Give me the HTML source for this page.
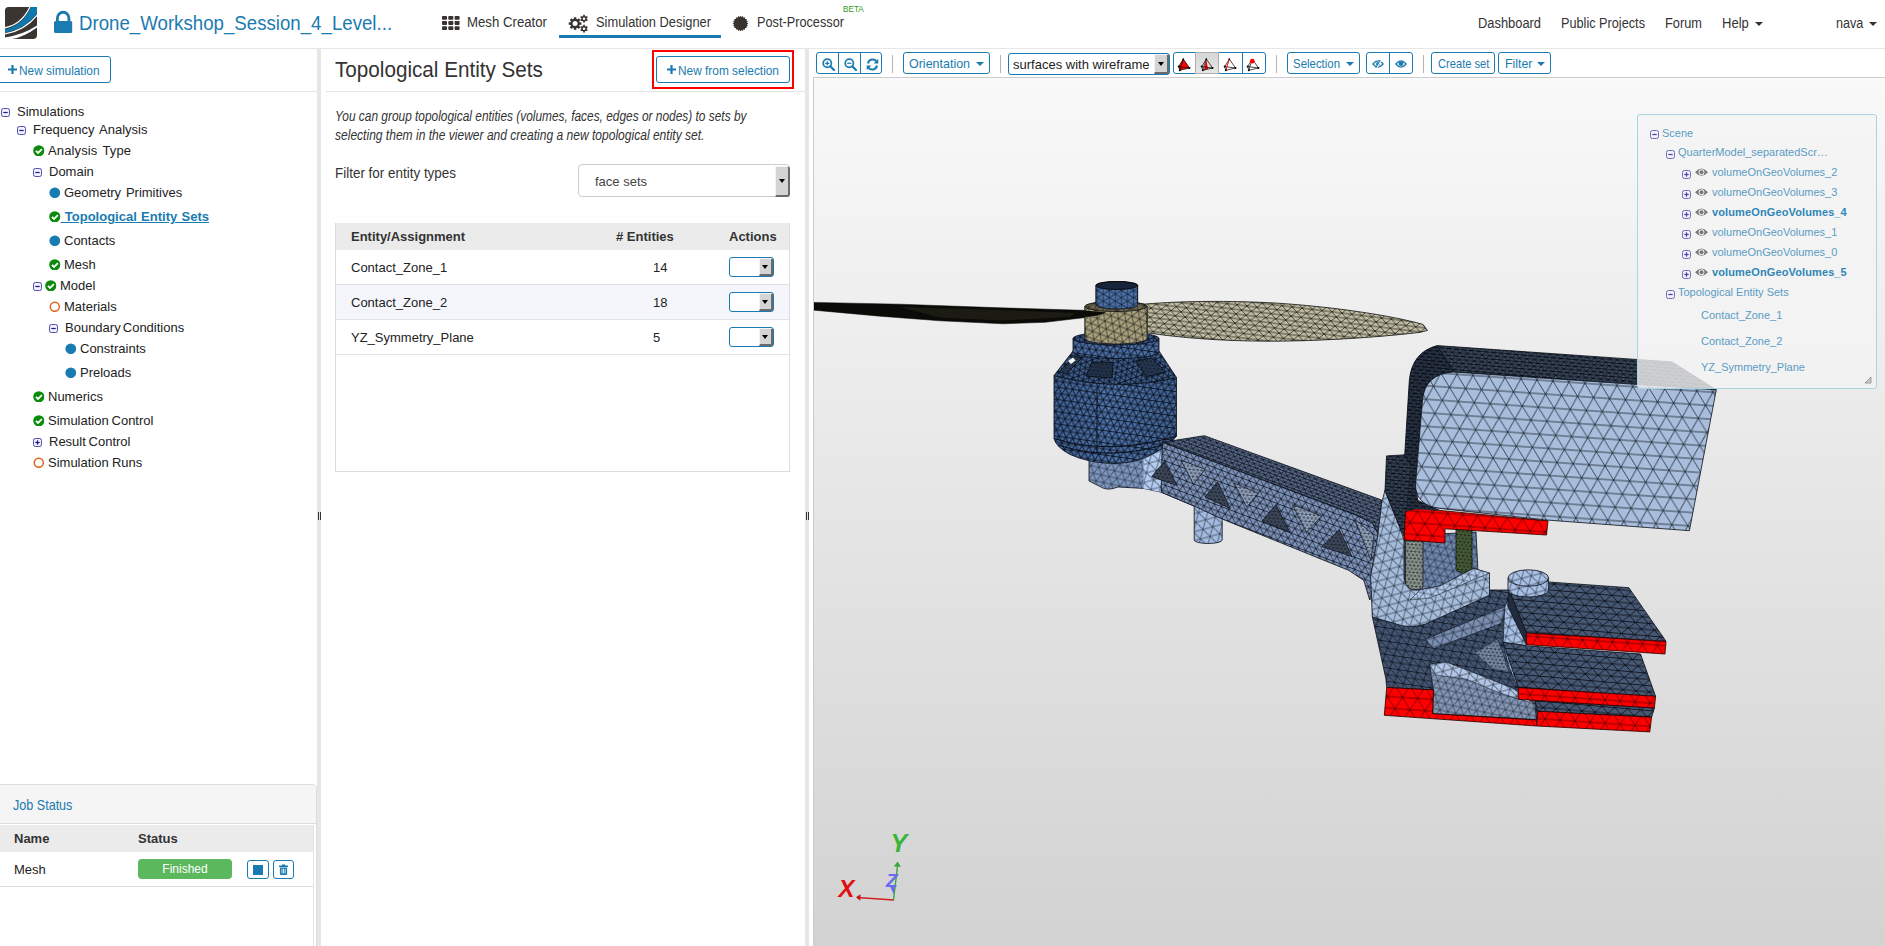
<!DOCTYPE html>
<html>
<head>
<meta charset="utf-8">
<title>SimScale</title>
<style>
*{box-sizing:border-box;margin:0;padding:0}
html,body{width:1885px;height:946px;overflow:hidden;background:#fff;font-family:"Liberation Sans",sans-serif;color:#333;font-size:13px}
.a{position:absolute;white-space:nowrap}
.t{position:absolute;white-space:nowrap;line-height:1;transform-origin:0 50%}
/* header */
#hdr{left:0;top:0;width:1885px;height:49px;border-bottom:1px solid #e7e7e7;background:#fff}
.nav{font-size:14px;color:#333}
/* buttons */
.btn{position:absolute;border:1px solid #1a7bb0;border-radius:3px;background:#fff;color:#1a7bb0;white-space:nowrap}
.sep{position:absolute;width:1px;background:#bcb0a8;top:55px;height:18px}
/* tree */
.tr{position:absolute;white-space:nowrap;font-size:13px;line-height:15px;color:#222;margin-top:1px}
.tg{position:absolute;width:10px;height:10px}
.ic{position:absolute;width:12px;height:12px}
/* scene tree */
.st{position:absolute;white-space:nowrap;font-size:11px;line-height:13px;color:#5a9cc4;margin-top:1px}
</style>
</head>
<body>
<!-- ============ HEADER ============ -->
<div class="a" id="hdr"></div>
<svg class="a" id="logo" style="left:5px;top:7px" width="32" height="32" viewBox="0 0 32 32">
<path d="M3.5,0 H32 V28 a4,4 0 0 1 -4,4 H0 V3.5 a3.5,3.5 0 0 1 3.5,-3.5 Z" fill="#3b3532"/>
<path d="M0,20 Q16,17 24.2,0 L25.6,0 Q17,18.2 0,21.4 Z" fill="#fff"/>
<path d="M0,22.2 Q17.6,18.8 26,0 L32,0 L32,6.9 Q20,22 0,25.8 Z" fill="#0d78ae"/>
<path d="M0,26.3 Q20,22.6 32,7.6 L32,9.2 Q20,24 0,27.6 Z" fill="#fff"/>
<path d="M0,30.4 Q18,28 32,18.6 L32,20.4 Q19,30 6.7,32 L0,32 Z" fill="#fff"/>
</svg>
<svg class="a" id="lock" style="left:54px;top:10px" width="19" height="24" viewBox="0 0 19 24">
<path d="M2,11.5 V8 a7.15,7.15 0 0 1 14.3,0 V11.5 h-2.8 V8 a4.35,4.35 0 0 0 -8.7,0 V11.5 Z" fill="#1a7bb0"/>
<rect x="0" y="11" width="18.2" height="12" rx="1.6" fill="#1a7bb0"/>
</svg>
<div class="t" id="title" style="left:79.3px;top:11.5px;font-size:21px;color:#1a7bb0;transform:scaleX(.889)">Drone_Workshop_Session_4_Level...</div>

<svg class="a" id="icth" style="left:442px;top:16px" width="18" height="15" viewBox="0 0 18 15" fill="#39332f">
<rect x="0" y="0" width="5" height="3.8" rx=".8"/><rect x="6.3" y="0" width="5" height="3.8" rx=".8"/><rect x="12.6" y="0" width="5" height="3.8" rx=".8"/>
<rect x="0" y="5.1" width="5" height="3.8" rx=".8"/><rect x="6.3" y="5.1" width="5" height="3.8" rx=".8"/><rect x="12.6" y="5.1" width="5" height="3.8" rx=".8"/>
<rect x="0" y="10.2" width="5" height="3.8" rx=".8"/><rect x="6.3" y="10.2" width="5" height="3.8" rx=".8"/><rect x="12.6" y="10.2" width="5" height="3.8" rx=".8"/>
</svg>
<div class="t nav" id="n1" style="left:467px;top:15px;transform:scaleX(.943)">Mesh Creator</div>

<svg class="a" id="iccogs" style="left:568px;top:14px" width="21" height="19" viewBox="0 0 21 19"><g fill="#39332f"><circle cx="7.06" cy="9.57" r="4.7"/><rect x="5.81" y="3.27" width="2.5" height="12.60" transform="rotate(0.0 7.06 9.57)"/><rect x="5.81" y="3.27" width="2.5" height="12.60" transform="rotate(45.0 7.06 9.57)"/><rect x="5.81" y="3.27" width="2.5" height="12.60" transform="rotate(90.0 7.06 9.57)"/><rect x="5.81" y="3.27" width="2.5" height="12.60" transform="rotate(135.0 7.06 9.57)"/><circle cx="16.03" cy="4.66" r="2.75"/><rect x="15.18" y="0.76" width="1.7" height="7.80" transform="rotate(0.0 16.03 4.66)"/><rect x="15.18" y="0.76" width="1.7" height="7.80" transform="rotate(60.0 16.03 4.66)"/><rect x="15.18" y="0.76" width="1.7" height="7.80" transform="rotate(120.0 16.03 4.66)"/><circle cx="16.03" cy="14.64" r="2.75"/><rect x="15.18" y="10.74" width="1.7" height="7.80" transform="rotate(0.0 16.03 14.64)"/><rect x="15.18" y="10.74" width="1.7" height="7.80" transform="rotate(60.0 16.03 14.64)"/><rect x="15.18" y="10.74" width="1.7" height="7.80" transform="rotate(120.0 16.03 14.64)"/></g><circle cx="7.06" cy="9.57" r="2.5" fill="#fff"/><circle cx="16.03" cy="4.66" r="1.25" fill="#fff"/><circle cx="16.03" cy="14.64" r="1.25" fill="#fff"/></svg>
<div class="t nav" id="n2" style="left:596px;top:15px;transform:scaleX(.918)">Simulation Designer</div>
<div class="a" id="uline" style="left:559px;top:35px;width:162px;height:3px;background:#1a7bb0"></div>

<svg class="a" id="iccert" style="left:732px;top:15.1px" width="17" height="17" viewBox="-8.5 -8.5 17 17"><polygon points="0.00,-7.80 1.02,-6.42 2.41,-7.42 2.95,-5.79 4.58,-6.31 4.60,-4.60 6.31,-4.58 5.79,-2.95 7.42,-2.41 6.42,-1.02 7.80,-0.00 6.42,1.02 7.42,2.41 5.79,2.95 6.31,4.58 4.60,4.60 4.58,6.31 2.95,5.79 2.41,7.42 1.02,6.42 0.00,7.80 -1.02,6.42 -2.41,7.42 -2.95,5.79 -4.58,6.31 -4.60,4.60 -6.31,4.58 -5.79,2.95 -7.42,2.41 -6.42,1.02 -7.80,0.00 -6.42,-1.02 -7.42,-2.41 -5.79,-2.95 -6.31,-4.58 -4.60,-4.60 -4.58,-6.31 -2.95,-5.79 -2.41,-7.42 -1.02,-6.42" fill="#39332f"/></svg>
<div class="t nav" id="n3" style="left:757px;top:15px;transform:scaleX(.909)">Post-Processor</div>
<div class="t" id="beta" style="left:843.3px;top:5px;font-size:9px;color:#2f9a1a;transform:scaleX(.91)">BETA</div>

<div class="t nav" id="n4" style="left:1478px;top:16px;transform:scaleX(.92)">Dashboard</div>
<div class="t nav" id="n5" style="left:1561px;top:16px;transform:scaleX(.907)">Public Projects</div>
<div class="t nav" id="n6" style="left:1665px;top:16px;transform:scaleX(.914)">Forum</div>
<div class="t nav" id="n7" style="left:1722px;top:16px;transform:scaleX(.93)">Help</div>
<div class="a" style="left:1755px;top:22px;width:0;height:0;border-left:4px solid transparent;border-right:4px solid transparent;border-top:4px solid #333"></div>
<div class="t nav" id="n8" style="left:1836px;top:16px;transform:scaleX(.9)">nava</div>
<div class="a" style="left:1869px;top:22px;width:0;height:0;border-left:4px solid transparent;border-right:4px solid transparent;border-top:4px solid #333"></div>

<!-- ============ LEFT PANEL ============ -->
<div class="btn" id="newsim" style="left:-3px;top:56px;width:114px;height:27px"></div>
<svg class="a" style="left:8px;top:65px" width="9" height="9" viewBox="0 0 9 9"><path d="M3.4,0 h2.2 v3.4 h3.4 v2.2 h-3.4 v3.4 h-2.2 v-3.4 h-3.4 v-2.2 h3.4 Z" fill="#1a7bb0"/></svg>
<div class="t" id="newsimt" style="left:18.5px;top:64.5px;font-size:12.5px;color:#1a7bb0;transform:scaleX(.95)">New simulation</div>
<div class="a" id="split1" style="left:317px;top:49px;width:4px;height:897px;background:#e6e6e6"></div>
<div class="a" id="split2" style="left:805px;top:49px;width:4px;height:897px;background:#e6e6e6"></div>
<div class="a" style="left:0;top:91px;width:317px;height:1px;background:#e5e5e5"></div>
<div class="a" style="left:326px;top:91px;width:479px;height:1px;background:#e5e5e5"></div>

<svg width="0" height="0" style="position:absolute">
<defs>
<symbol id="tgm" viewBox="0 0 10 10"><rect x=".6" y=".6" width="8.8" height="8.8" rx="2" fill="#f4f4ff" stroke="#4a4aa8" stroke-width="1.1"/><rect x="2.6" y="4.3" width="4.8" height="1.4" fill="#1a1a8c"/></symbol>
<symbol id="tgp" viewBox="0 0 10 10"><rect x=".6" y=".6" width="8.8" height="8.8" rx="2" fill="#f4f4ff" stroke="#4a4aa8" stroke-width="1.1"/><rect x="2.6" y="4.3" width="4.8" height="1.4" fill="#1a1a8c"/><rect x="4.3" y="2.6" width="1.4" height="4.8" fill="#1a1a8c"/></symbol>
<symbol id="chk" viewBox="0 0 12 12"><circle cx="6" cy="6" r="5.8" fill="#0b8a0b"/><path d="M3,6.1 L5.2,8.3 L9.2,4.3" fill="none" stroke="#fff" stroke-width="1.9"/></symbol>
<symbol id="dot" viewBox="0 0 12 12"><circle cx="6" cy="6" r="5.6" fill="#1a7bb0"/></symbol>
<symbol id="ring" viewBox="0 0 12 12"><circle cx="6" cy="6" r="4.7" fill="#fff" stroke="#e0621c" stroke-width="1.5"/></symbol>
<symbol id="eye" viewBox="0 0 14 9"><path d="M0,4.5 Q7,-3.2 14,4.5 Q7,12.2 0,4.5 Z" fill="#777"/><circle cx="7" cy="4.5" r="3.1" fill="#f2f2f2"/><circle cx="7" cy="4.5" r="2.1" fill="#777"/></symbol>
</defs></svg>

<svg class="a" style="left:1px;top:108.0px" width="9" height="9"><use href="#tgm"/></svg>
<div class="tr" style="left:17px;top:103px;">Simulations</div>
<svg class="a" style="left:17px;top:126.0px" width="9" height="9"><use href="#tgm"/></svg>
<div class="tr" style="left:33px;top:121px;word-spacing:1.7px">Frequency Analysis</div>
<svg class="a" style="left:33px;top:144.6px" width="11.6" height="11.6"><use href="#chk"/></svg>
<div class="tr" style="left:48px;top:142px;word-spacing:1.5px;letter-spacing:.13px">Analysis Type</div>
<svg class="a" style="left:33px;top:168.0px" width="9" height="9"><use href="#tgm"/></svg>
<div class="tr" style="left:49px;top:163px;">Domain</div>
<svg class="a" style="left:49px;top:186.6px" width="11.6" height="11.6"><use href="#dot"/></svg>
<div class="tr" style="left:64px;top:184px;word-spacing:1.2px">Geometry Primitives</div>
<svg class="a" style="left:49px;top:210.6px" width="11.6" height="11.6"><use href="#chk"/></svg>
<div class="tr" style="left:60.5px;top:208px;font-weight:700;color:#1a7bb0;text-decoration:underline;word-spacing:0.7px">&nbsp;Topological Entity Sets</div>
<svg class="a" style="left:49px;top:234.6px" width="11.6" height="11.6"><use href="#dot"/></svg>
<div class="tr" style="left:64px;top:232px;">Contacts</div>
<svg class="a" style="left:49px;top:258.6px" width="11.6" height="11.6"><use href="#chk"/></svg>
<div class="tr" style="left:64px;top:256px;">Mesh</div>
<svg class="a" style="left:33px;top:282.0px" width="9" height="9"><use href="#tgm"/></svg>
<svg class="a" style="left:45px;top:279.6px" width="11.6" height="11.6"><use href="#chk"/></svg>
<div class="tr" style="left:60px;top:277px;">Model</div>
<svg class="a" style="left:49px;top:300.6px" width="11.6" height="11.6"><use href="#ring"/></svg>
<div class="tr" style="left:64px;top:298px;">Materials</div>
<svg class="a" style="left:49px;top:324.0px" width="9" height="9"><use href="#tgm"/></svg>
<div class="tr" style="left:65px;top:319px;word-spacing:-1.5px">Boundary Conditions</div>
<svg class="a" style="left:65px;top:342.6px" width="11.6" height="11.6"><use href="#dot"/></svg>
<div class="tr" style="left:80px;top:340px;">Constraints</div>
<svg class="a" style="left:65px;top:366.6px" width="11.6" height="11.6"><use href="#dot"/></svg>
<div class="tr" style="left:80px;top:364px;">Preloads</div>
<svg class="a" style="left:33px;top:390.6px" width="11.6" height="11.6"><use href="#chk"/></svg>
<div class="tr" style="left:48px;top:388px;">Numerics</div>
<svg class="a" style="left:33px;top:414.6px" width="11.6" height="11.6"><use href="#chk"/></svg>
<div class="tr" style="left:48px;top:412px;word-spacing:-0.8px">Simulation Control</div>
<svg class="a" style="left:33px;top:438.0px" width="9" height="9"><use href="#tgp"/></svg>
<div class="tr" style="left:49px;top:433px;word-spacing:-0.9px">Result Control</div>
<svg class="a" style="left:33px;top:456.6px" width="11.6" height="11.6"><use href="#ring"/></svg>
<div class="tr" style="left:48px;top:454px;word-spacing:-0.4px">Simulation Runs</div>
<!-- job status -->
<div class="a" id="jobpanel" style="left:-1px;top:784px;width:318px;height:170px;border:1px solid #ddd;border-radius:0 4px 0 0;background:#fff"></div>
<div class="a" style="left:0;top:785px;width:316px;height:39px;background:#f5f5f5;border-bottom:1px solid #ddd;border-radius:0 3px 0 0"></div>
<div class="t" id="jobt" style="left:13px;top:798px;font-size:14.5px;color:#1a7bb0;transform:scaleX(.867)">Job Status</div>
<div class="a" style="left:0;top:825px;width:313px;height:27px;background:#ebebeb"></div>
<div class="a" style="left:313px;top:825px;width:1px;height:121px;background:#e3e3e3"></div>
<div class="tr" style="left:14px;top:830px;font-weight:700;color:#333">Name</div>
<div class="tr" style="left:138px;top:830px;font-weight:700;color:#333">Status</div>
<div class="tr" style="left:14px;top:861px;color:#222">Mesh</div>
<div class="a" style="left:138px;top:859px;width:94px;height:20px;background:#5cb85c;border-radius:4px;color:#fff;font-size:12px;line-height:21px;text-align:center">Finished</div>
<div class="btn" style="left:247px;top:860px;width:22px;height:19px"></div>
<div class="a" style="left:253px;top:865px;width:10px;height:10px;background:#1a7bb0"></div>
<div class="btn" style="left:273px;top:860px;width:21px;height:19px"></div>
<svg class="a" style="left:279px;top:864px" width="9" height="11" viewBox="0 0 9 11"><path d="M0,1.6 h2.8 v-1.2 h3.4 v1.2 h2.8 v1.3 h-9 Z M.9,3.6 h7.2 v6.4 a1,1 0 0 1 -1,1 h-5.2 a1,1 0 0 1 -1,-1 Z" fill="#1a7bb0"/><path d="M2.9,4.8 v4.6 M4.5,4.8 v4.6 M6.1,4.8 v4.6" stroke="#fff" stroke-width=".8"/></svg>
<div class="a" style="left:0;top:886px;width:313px;height:1px;background:#ddd"></div>

<!-- ============ MIDDLE PANEL ============ -->
<div class="t" id="mtitle" style="left:334.5px;top:58.8px;font-size:21.7px;color:#333;transform:scaleX(.953)">Topological Entity Sets</div>
<div class="a" id="redbox" style="left:652px;top:50px;width:142px;height:39px;border:2px solid #f00"></div>
<div class="btn" id="newsel" style="left:656px;top:56px;width:134px;height:27px"></div>
<svg class="a" style="left:667px;top:65px" width="9" height="9" viewBox="0 0 9 9"><path d="M3.4,0 h2.2 v3.4 h3.4 v2.2 h-3.4 v3.4 h-2.2 v-3.4 h-3.4 v-2.2 h3.4 Z" fill="#1a7bb0"/></svg>
<div class="t" id="newselt" style="left:678px;top:64.5px;font-size:12.5px;color:#1a7bb0;transform:scaleX(.95)">New from selection</div>
<div class="t" id="desc1" style="left:335px;top:109px;font-size:14px;font-style:italic;color:#333;transform:scaleX(.85)">You can group topological entities (volumes, faces, edges or nodes) to sets by</div>
<div class="t" id="desc2" style="left:335px;top:128px;font-size:14px;font-style:italic;color:#333;transform:scaleX(.86)">selecting them in the viewer and creating a new topological entity set.</div>
<div class="t" id="filt" style="left:335px;top:166px;font-size:14px;color:#333;transform:scaleX(.96)">Filter for entity types</div>
<div class="a" id="sel1" style="left:578px;top:164px;width:212px;height:33px;border:1px solid #ccc;border-radius:4px;background:#fff"></div>
<div class="a" style="left:775px;top:166px;width:15px;height:31px;background:#d4d4d4;border-left:1px solid #f4f4f4;border-top:1px solid #f4f4f4;border-right:2px solid #6a6a6a;border-bottom:2px solid #6a6a6a;border-radius:0 3px 3px 0"></div>
<div class="a" style="left:778.5px;top:179px;width:0;height:0;border-left:3.5px solid transparent;border-right:3.5px solid transparent;border-top:4px solid #000"></div>
<div class="tr" style="left:595px;top:173px;color:#444">face sets</div>

<div class="a" id="tblbox" style="left:335px;top:223px;width:455px;height:249px;border:1px solid #ddd;background:#fff"></div>
<div class="a" style="left:336px;top:223px;width:453px;height:27px;background:#ebebeb"></div>
<div class="tr" style="left:351px;top:228px;font-weight:700;color:#333">Entity/Assignment</div>
<div class="tr" style="left:616px;top:228px;font-weight:700;color:#333">#&nbsp;Entities</div>
<div class="tr" style="left:729px;top:228px;font-weight:700;color:#333">Actions</div>
<div class="a" style="left:336px;top:285px;width:453px;height:35px;background:#f4f6fb"></div>
<div class="a" style="left:336px;top:284px;width:453px;height:1px;background:#e2e2e2"></div>
<div class="a" style="left:336px;top:319px;width:453px;height:1px;background:#e2e2e2"></div>
<div class="a" style="left:336px;top:354px;width:453px;height:1px;background:#e2e2e2"></div>
<div class="tr" style="left:351px;top:259px">Contact_Zone_1</div>
<div class="tr" style="left:351px;top:294px">Contact_Zone_2</div>
<div class="tr" style="left:351px;top:329px">YZ_Symmetry_Plane</div>
<div class="tr" style="left:653px;top:259px">14</div>
<div class="tr" style="left:653px;top:294px">18</div>
<div class="tr" style="left:653px;top:329px">5</div>
<div class="a" style="left:729px;top:257px;width:45px;height:20px;border:1px solid #1a7bb0;border-radius:3px;background:#fff"></div>
<div class="a" style="left:759px;top:258px;width:14px;height:18px;background:#d4d4d4;border-left:1px solid #f4f4f4;border-top:1px solid #f4f4f4;border-right:2px solid #6a6a6a;border-bottom:2px solid #6a6a6a"></div>
<div class="a" style="left:762px;top:265px;width:0;height:0;border-left:3.5px solid transparent;border-right:3.5px solid transparent;border-top:4px solid #000"></div>
<div class="a" style="left:729px;top:292px;width:45px;height:20px;border:1px solid #1a7bb0;border-radius:3px;background:#fff"></div>
<div class="a" style="left:759px;top:293px;width:14px;height:18px;background:#d4d4d4;border-left:1px solid #f4f4f4;border-top:1px solid #f4f4f4;border-right:2px solid #6a6a6a;border-bottom:2px solid #6a6a6a"></div>
<div class="a" style="left:762px;top:300px;width:0;height:0;border-left:3.5px solid transparent;border-right:3.5px solid transparent;border-top:4px solid #000"></div>
<div class="a" style="left:729px;top:327px;width:45px;height:20px;border:1px solid #1a7bb0;border-radius:3px;background:#fff"></div>
<div class="a" style="left:759px;top:328px;width:14px;height:18px;background:#d4d4d4;border-left:1px solid #f4f4f4;border-top:1px solid #f4f4f4;border-right:2px solid #6a6a6a;border-bottom:2px solid #6a6a6a"></div>
<div class="a" style="left:762px;top:335px;width:0;height:0;border-left:3.5px solid transparent;border-right:3.5px solid transparent;border-top:4px solid #000"></div>
<div class="a" style="left:318px;top:512px;width:1px;height:8px;background:#333"></div><div class="a" style="left:320px;top:512px;width:1px;height:8px;background:#333"></div>
<div class="a" style="left:806px;top:512px;width:1px;height:8px;background:#333"></div><div class="a" style="left:808px;top:512px;width:1px;height:8px;background:#333"></div>

<!-- ============ TOOLBAR ============ -->
<div class="a" style="left:813px;top:77px;width:1072px;height:1px;background:#ccc"></div>
<div class="btn" style="left:816px;top:52px;width:66px;height:22px"></div>
<div class="a" style="left:838px;top:52px;width:1px;height:22px;background:#1a7bb0"></div>
<div class="a" style="left:860px;top:52px;width:1px;height:22px;background:#1a7bb0"></div>
<svg class="a" style="left:821.5px;top:58px" width="13" height="13" viewBox="0 0 13 13"><circle cx="5.3" cy="5.3" r="4.1" fill="none" stroke="#1a7bb0" stroke-width="1.7"/><path d="M8.3,8.3 L12,12" stroke="#1a7bb0" stroke-width="2.2" stroke-linecap="round"/><path d="M3.2,5.3 h4.2 M5.3,3.2 v4.2" stroke="#1a7bb0" stroke-width="1.2"/></svg>
<svg class="a" style="left:843.5px;top:58px" width="13" height="13" viewBox="0 0 13 13"><circle cx="5.3" cy="5.3" r="4.1" fill="none" stroke="#1a7bb0" stroke-width="1.7"/><path d="M8.3,8.3 L12,12" stroke="#1a7bb0" stroke-width="2.2" stroke-linecap="round"/><path d="M3.2,5.3 h4.2" stroke="#1a7bb0" stroke-width="1.2"/></svg>
<svg class="a" style="left:865.5px;top:58px" width="13" height="13" viewBox="0 0 13 13"><path d="M2,5.5 A4.8,4.8 0 0 1 10.6,3.4" fill="none" stroke="#1a7bb0" stroke-width="2"/><path d="M12.3,1 V5.6 H7.7 Z" fill="#1a7bb0"/><path d="M11,7.5 A4.8,4.8 0 0 1 2.4,9.6" fill="none" stroke="#1a7bb0" stroke-width="2"/><path d="M.7,12 V7.4 H5.3 Z" fill="#1a7bb0"/></svg>
<div class="sep" style="left:892px"></div>
<div class="btn" style="left:903px;top:52px;width:87px;height:22px"></div>
<div class="t" style="left:909px;top:57px;font-size:13px;color:#1a7bb0;transform:scaleX(.96)">Orientation</div>
<div class="a" style="left:975.5px;top:62px;width:0;height:0;border-left:4px solid transparent;border-right:4px solid transparent;border-top:4px solid #1a7bb0"></div>
<div class="sep" style="left:1000px"></div>
<div class="a" style="left:1008px;top:53px;width:162px;height:22px;border:1px solid #1a7bb0;border-radius:3px;background:#fff"></div>
<div class="a" style="left:1154px;top:54px;width:15px;height:20px;background:#d4d4d4;border-left:1px solid #f4f4f4;border-top:1px solid #f4f4f4;border-right:2px solid #6a6a6a;border-bottom:2px solid #6a6a6a"></div>
<div class="a" style="left:1157.5px;top:62px;width:0;height:0;border-left:3.5px solid transparent;border-right:3.5px solid transparent;border-top:4px solid #000"></div>
<div class="tr" style="left:1013px;top:56px;color:#222">surfaces with wireframe</div>
<div class="btn" style="left:1173px;top:52px;width:93px;height:22px"></div>
<div class="a" style="left:1195px;top:52px;width:24px;height:22px;background:linear-gradient(#d6d6d6,#e6e6e6);border:1px solid #adadad"></div>
<div class="a" style="left:1242px;top:52px;width:1px;height:22px;background:#1a7bb0"></div>
<svg class="a" style="left:1173.2px;top:52px" width="93" height="22" viewBox="0 0 93 22">
<g id="tet1"><path d="M10.3,7.1 L5.7,14.6 L6.8,18.3 L16.5,16 Z" fill="#f00"/><path d="M10.3,7.1 L5.7,14.6 L6.8,18.3 L16.5,16 Z M10.3,7.1 L6.8,18.3 M5.7,14.6 L16.5,16" fill="none" stroke="#000" stroke-width=".7"/><circle cx="10.3" cy="7.1" r=".9"/><circle cx="5.7" cy="14.6" r="1"/><circle cx="6.8" cy="18.3" r="1"/><circle cx="16.5" cy="16" r="1"/></g>
<g transform="translate(23 0)"><path d="M10.3,7.1 L8,17.9 L12,17 Z" fill="#f00"/><path d="M10.3,7.1 L5.7,14.6 L6.8,18.3 L16.5,16 Z M10.3,7.1 L6.8,18.3 M5.7,14.6 L16.5,16" fill="none" stroke="#000" stroke-width=".7"/><circle cx="10.3" cy="7.1" r=".9"/><circle cx="5.7" cy="14.6" r="1"/><circle cx="6.8" cy="18.3" r="1"/><circle cx="16.5" cy="16" r="1"/></g>
<g transform="translate(46 0)"><path d="M10.3,7.1 L5.7,14.6 L6.8,18.3 L16.5,16 Z M5.7,14.6 L16.5,16" fill="none" stroke="#000" stroke-width=".7"/><path d="M10.3,7.1 L6.8,18.3" stroke="#f00" stroke-width="1"/><circle cx="10.3" cy="7.1" r=".9"/><circle cx="5.7" cy="14.6" r="1"/><circle cx="6.8" cy="18.3" r="1"/><circle cx="16.5" cy="16" r="1"/></g>
<g transform="translate(69 0)"><path d="M10.3,7.1 L5.7,14.6 L6.8,18.3 L16.5,16 Z M10.3,7.1 L6.8,18.3 M5.7,14.6 L16.5,16" fill="none" stroke="#000" stroke-width=".7"/><circle cx="10.3" cy="9.2" r="2.35" fill="#f00"/><circle cx="5.7" cy="14.6" r="1"/><circle cx="6.8" cy="18.3" r="1"/><circle cx="16.5" cy="16" r="1"/></g>
</svg>
<div class="sep" style="left:1276px"></div>
<div class="btn" style="left:1287px;top:52px;width:73px;height:22px"></div>
<div class="t" style="left:1293px;top:57px;font-size:13px;color:#1a7bb0;transform:scaleX(.88)">Selection</div>
<div class="a" style="left:1346px;top:62px;width:0;height:0;border-left:4px solid transparent;border-right:4px solid transparent;border-top:4px solid #1a7bb0"></div>
<div class="btn" style="left:1366px;top:52px;width:47px;height:22px"></div>
<div class="a" style="left:1389px;top:52px;width:1px;height:22px;background:#1a7bb0"></div>
<svg class="a" style="left:1372px;top:59.8px" width="12" height="8" viewBox="0 0 14 10"><path d="M.6,5 Q7,-2.6 13.4,5 Q7,12.6 .6,5 Z" fill="none" stroke="#1a7bb0" stroke-width="1.5"/><circle cx="7" cy="5" r="2.5" fill="#1a7bb0"/><path d="M10.8,-.2 L4.6,10.2" stroke="#fff" stroke-width="2.6"/><path d="M10,-.2 L4,10.2" stroke="#1a7bb0" stroke-width="1.4"/></svg>
<svg class="a" style="left:1395px;top:59.8px" width="12" height="8" viewBox="0 0 14 10"><path d="M.6,5 Q7,-2.6 13.4,5 Q7,12.6 .6,5 Z" fill="none" stroke="#1a7bb0" stroke-width="1.6"/><circle cx="7" cy="4.6" r="3" fill="#1a7bb0"/></svg>
<div class="sep" style="left:1423px"></div>
<div class="btn" style="left:1431px;top:52px;width:64px;height:22px"></div>
<div class="t" style="left:1437.5px;top:57px;font-size:13px;color:#1a7bb0;transform:scaleX(.857)">Create set</div>
<div class="btn" style="left:1498px;top:52px;width:53px;height:22px"></div>
<div class="t" style="left:1504.5px;top:57px;font-size:13px;color:#1a7bb0;transform:scaleX(.95)">Filter</div>
<div class="a" style="left:1537px;top:62px;width:0;height:0;border-left:4px solid transparent;border-right:4px solid transparent;border-top:4px solid #1a7bb0"></div>

<!-- ============ VIEWER ============ -->
<div class="a" id="viewer" style="left:813px;top:77px;width:1072px;height:869px;border-left:1px solid #ccc;border-top:1px solid #ccc;background:linear-gradient(#f9f9f9,#d2d2d2)"></div>
<!--MODEL-START-->
<svg class="a" id="model" style="left:814px;top:78px" width="1071" height="868" viewBox="814 78 1071 868">
<defs>
<pattern id="pMotor" width="7" height="12.12" patternUnits="userSpaceOnUse" patternTransform="rotate(8)"><path d="M0,0 H7 M0,6.06 H7 M0,12.12 H7 M0,0 L3.5,6.06 L0,12.12 M7,0 L3.5,6.06 L7,12.12" fill="none" stroke="#060c18" stroke-width="1.0" stroke-opacity="0.85"/></pattern>
<pattern id="pMotor2" width="6" height="10.39" patternUnits="userSpaceOnUse" patternTransform="rotate(-20)"><path d="M0,0 H6 M0,5.20 H6 M0,10.39 H6 M0,0 L3.0,5.20 L0,10.39 M6,0 L3.0,5.20 L6,10.39" fill="none" stroke="#060c18" stroke-width="1.0" stroke-opacity="0.85"/></pattern>
<pattern id="pHub" width="7" height="12.12" patternUnits="userSpaceOnUse" patternTransform="rotate(30)"><path d="M0,0 H7 M0,6.06 H7 M0,12.12 H7 M0,0 L3.5,6.06 L0,12.12 M7,0 L3.5,6.06 L7,12.12" fill="none" stroke="#0a1422" stroke-width="0.8" stroke-opacity="0.8"/></pattern>
<pattern id="pTan" width="8" height="13.86" patternUnits="userSpaceOnUse" patternTransform="rotate(20)"><path d="M0,0 H8 M0,6.93 H8 M0,13.86 H8 M0,0 L4.0,6.93 L0,13.86 M8,0 L4.0,6.93 L8,13.86" fill="none" stroke="#111" stroke-width="0.8" stroke-opacity="0.8"/></pattern>
<pattern id="pBlade" width="10" height="9.20" patternUnits="userSpaceOnUse" patternTransform="rotate(7)"><path d="M0,0 H10 M0,4.60 H10 M0,9.20 H10 M0,0 L5.0,4.60 L0,9.20 M10,0 L5.0,4.60 L10,9.20" fill="none" stroke="#0c0c08" stroke-width="0.75" stroke-opacity="0.9"/></pattern>
<pattern id="pArmTop" width="7" height="6.80" patternUnits="userSpaceOnUse" patternTransform="rotate(20)"><path d="M0,0 H7 M0,3.40 H7 M0,6.80 H7 M0,0 L3.5,3.40 L0,6.80 M7,0 L3.5,3.40 L7,6.80" fill="none" stroke="#05080e" stroke-width="0.8" stroke-opacity="0.85"/></pattern>
<pattern id="pArmSide" width="7" height="12.12" patternUnits="userSpaceOnUse" patternTransform="matrix(1 0.38 0 1 0 0)"><path d="M0,0 H7 M0,6.06 H7 M0,12.12 H7 M0,0 L3.5,6.06 L0,12.12 M7,0 L3.5,6.06 L7,12.12" fill="none" stroke="#070c14" stroke-width="0.85" stroke-opacity="0.8"/></pattern>
<pattern id="pLight" width="8" height="13.86" patternUnits="userSpaceOnUse" patternTransform="rotate(12)"><path d="M0,0 H8 M0,6.93 H8 M0,13.86 H8 M0,0 L4.0,6.93 L0,13.86 M8,0 L4.0,6.93 L8,13.86" fill="none" stroke="#0c1420" stroke-width="0.7" stroke-opacity="0.75"/></pattern>
<pattern id="pLight2" width="10" height="17.32" patternUnits="userSpaceOnUse" patternTransform="rotate(-15)"><path d="M0,0 H10 M0,8.66 H10 M0,17.32 H10 M0,0 L5.0,8.66 L0,17.32 M10,0 L5.0,8.66 L10,17.32" fill="none" stroke="#0c1420" stroke-width="0.7" stroke-opacity="0.8"/></pattern>
<pattern id="pBox" width="16" height="27.71" patternUnits="userSpaceOnUse" patternTransform="matrix(1 0.07 0.05 0.98 3 2)"><path d="M0,0 H16 M0,13.86 H16 M0,27.71 H16 M0,0 L8.0,13.86 L0,27.71 M16,0 L8.0,13.86 L16,27.71" fill="none" stroke="#0c121c" stroke-width="0.85" stroke-opacity="0.85"/></pattern>
<pattern id="pBoxTop" width="7.5" height="6.80" patternUnits="userSpaceOnUse" patternTransform="rotate(5)"><path d="M0,0 H7.5 M0,3.40 H7.5 M0,6.80 H7.5 M0,0 L3.75,3.40 L0,6.80 M7.5,0 L3.75,3.40 L7.5,6.80" fill="none" stroke="#04070c" stroke-width="0.85" stroke-opacity="0.9"/></pattern>
<pattern id="pPlate" width="13" height="12.40" patternUnits="userSpaceOnUse" patternTransform="rotate(5)"><path d="M0,0 H13 M0,6.20 H13 M0,12.40 H13 M0,0 L6.5,6.20 L0,12.40 M13,0 L6.5,6.20 L13,12.40" fill="none" stroke="#04070c" stroke-width="0.85" stroke-opacity="0.9"/></pattern>
<pattern id="pRed" width="15" height="25.98" patternUnits="userSpaceOnUse" patternTransform="matrix(1 0.07 0 0.9 0 3)"><path d="M0,0 H15 M0,12.99 H15 M0,25.98 H15 M0,0 L7.5,12.99 L0,25.98 M15,0 L7.5,12.99 L15,25.98" fill="none" stroke="#200" stroke-width="0.7" stroke-opacity="0.85"/></pattern>
<pattern id="pBase" width="9" height="15.59" patternUnits="userSpaceOnUse" patternTransform="matrix(1 0.15 0.3 0.9 0 0)"><path d="M0,0 H9 M0,7.79 H9 M0,15.59 H9 M0,0 L4.5,7.79 L0,15.59 M9,0 L4.5,7.79 L9,15.59" fill="none" stroke="#070b12" stroke-width="0.9" stroke-opacity="0.8"/></pattern>
<pattern id="pScrew" width="4" height="6.93" patternUnits="userSpaceOnUse" patternTransform="rotate(5)"><path d="M0,0 H4 M0,3.46 H4 M0,6.93 H4 M0,0 L2.0,3.46 L0,6.93 M4,0 L2.0,3.46 L4,6.93" fill="none" stroke="#111" stroke-width="0.7" stroke-opacity="0.7"/></pattern>
<linearGradient id="gMotor" x1="0" x2="1" y1="0" y2="0"><stop offset="0" stop-color="#3f6092"/><stop offset=".45" stop-color="#4d72a8"/><stop offset="1" stop-color="#40608f"/></linearGradient>
</defs>
<polygon points="814.0,302.4 900.0,304.2 1000.0,307.8 1090.0,310.5 1090.0,317.0 1045.0,322.3 1003.0,323.8 940.0,320.8 880.0,316.2 814.0,310.2" fill="#0b0b08" stroke="#000" stroke-width="0.5" stroke-linejoin="round"/>
<polygon points="900,307 1000,310 1075,313 1070,317 1003,320.5 940,317.5" fill="#2a2a1e" opacity=".55"/>
<path d="M1140,304 L1146,304 C1180,301 1230,300.5 1275,303 C1330,306.5 1390,315 1423,324.4 L1427.5,330.5 L1419.5,332.4 C1390,336 1340,340 1290,341 C1240,342 1190,339 1152,333.5 L1140,332 Z" fill="#c0bca2" stroke="#111" stroke-width="0.8" stroke-linejoin="round"/>
<path d="M1140,304 L1146,304 C1180,301 1230,300.5 1275,303 C1330,306.5 1390,315 1423,324.4 L1427.5,330.5 L1419.5,332.4 C1390,336 1340,340 1290,341 C1240,342 1190,339 1152,333.5 L1140,332 Z" fill="url(#pBlade)"/>
<path d="M1085,306.5 L1085,338.5 A31,5.5 0 0 0 1147,338.5 L1147,306.5 Z" fill="#a7a07c" stroke="#111" stroke-width="0.8" stroke-linejoin="round"/>
<path d="M1085,306.5 L1085,338.5 A31,5.5 0 0 0 1147,338.5 L1147,306.5 Z" fill="url(#pTan)"/>
<ellipse cx="1116" cy="306.5" rx="31" ry="5" fill="#6f694d" stroke="#111" stroke-width=".8"/>
<ellipse cx="1116" cy="306.5" rx="31" ry="5" fill="url(#pTan)"/>
<path d="M1096,285.5 L1096,305 A20.8,4 0 0 0 1137.6,305 L1137.6,285.5 Z" fill="#4b6fa5" stroke="#0a0f18" stroke-width="0.8" stroke-linejoin="round"/>
<path d="M1096,285.5 L1096,305 A20.8,4 0 0 0 1137.6,305 L1137.6,285.5 Z" fill="url(#pHub)"/>
<ellipse cx="1116.8" cy="285.5" rx="20.8" ry="4" fill="#17243a" stroke="#000" stroke-width=".8"/>
<path d="M1089,459 L1089,481 L1099,486 Q1106,490.5 1113,488.5 L1118,487 L1143.5,488.4 L1161.2,492.2 L1194.2,506.1 L1194.2,470 L1162.5,442.5 L1150,440 L1089,445 Z" fill="#7d95bd" stroke="#0a0f18" stroke-width="0.8" stroke-linejoin="round"/>
<path d="M1089,459 L1089,481 L1099,486 Q1106,490.5 1113,488.5 L1118,487 L1143.5,488.4 L1161.2,492.2 L1194.2,506.1 L1194.2,470 L1162.5,442.5 L1150,440 L1089,445 Z" fill="url(#pLight)"/>
<polygon points="1143.5,445.0 1161.2,443.0 1161.2,492.2 1143.5,488.4" fill="#b4ccf2" stroke="none" stroke-width="0" stroke-linejoin="round"/>
<polygon points="1143.5,445.0 1161.2,443.0 1161.2,492.2 1143.5,488.4" fill="url(#pLight2)"/>
<path d="M1054,375.5 L1054,438.5 Q1056,447 1070,454.5 Q1090,463.5 1115,463.5 Q1140,463 1158,451 Q1172,443 1176.5,436 L1176.5,377.5 Q1115,392 1054,375.5 Z" fill="url(#gMotor)" stroke="#0a0f18" stroke-width="0.8" stroke-linejoin="round"/>
<path d="M1054,375.5 L1054,438.5 Q1056,447 1070,454.5 Q1090,463.5 1115,463.5 Q1140,463 1158,451 Q1172,443 1176.5,436 L1176.5,377.5 Q1115,392 1054,375.5 Z" fill="url(#pMotor)"/>
<path d="M1054,438.5 Q1110,456 1176.5,436" fill="none" stroke="#0a1220" stroke-width="1.3"/>
<path d="M1058,445 Q1110,462 1168,443.5" fill="none" stroke="#0a1220" stroke-width="1.1"/>
<path d="M1097,388 V452" fill="none" stroke="#0a1220" stroke-width="1"/>
<path d="M1073,351 L1054,375.5 Q1115,392 1176.5,377.5 L1159,351 Q1116,365 1073,351 Z" fill="#40608f" stroke="#0a0f18" stroke-width="0.8" stroke-linejoin="round"/>
<path d="M1073,351 L1054,375.5 Q1115,392 1176.5,377.5 L1159,351 Q1116,365 1073,351 Z" fill="url(#pMotor2)"/>
<polygon points="1092.0,362.0 1113.0,362.5 1112.0,378.0 1086.0,376.0" fill="#263a5a" stroke="#05080e" stroke-width="0.8" stroke-linejoin="round"/>
<polygon points="1092.0,362.0 1113.0,362.5 1112.0,378.0 1086.0,376.0" fill="url(#pScrew)"/>
<polygon points="1136.0,361.0 1152.0,358.0 1166.0,372.0 1146.0,377.0" fill="#2a4064" stroke="#05080e" stroke-width="0.8" stroke-linejoin="round"/>
<polygon points="1136.0,361.0 1152.0,358.0 1166.0,372.0 1146.0,377.0" fill="url(#pScrew)"/>
<polygon points="1075.0,356.0 1082.0,358.0 1066.0,374.0 1059.0,372.0" fill="#2c4468" stroke="#05080e" stroke-width="0.8" stroke-linejoin="round"/>
<polygon points="1075.0,356.0 1082.0,358.0 1066.0,374.0 1059.0,372.0" fill="url(#pScrew)"/>
<polygon points="1068.0,361.0 1073.0,357.5 1075.5,360.5 1071.0,364.0" fill="#f4f4f4" stroke="none" stroke-width="0" stroke-linejoin="round"/>
<path d="M1073,338.5 L1073,352 A43,6.5 0 0 0 1159,352 L1159,338.5 Z" fill="#4b6fa5" stroke="#0a0f18" stroke-width="0.8" stroke-linejoin="round"/>
<path d="M1073,338.5 L1073,352 A43,6.5 0 0 0 1159,352 L1159,338.5 Z" fill="url(#pMotor)"/>
<ellipse cx="1116" cy="338.5" rx="43" ry="6.5" fill="#3c5a8a" stroke="#0a1220" stroke-width=".8"/>
<ellipse cx="1116" cy="338.5" rx="43" ry="6.5" fill="url(#pMotor2)"/>
<path d="M1085,306.5 L1085,338.5 A31,5.5 0 0 0 1147,338.5 L1147,306.5 Z" fill="#a7a07c" stroke="#111" stroke-width="0.8" stroke-linejoin="round"/>
<path d="M1085,306.5 L1085,338.5 A31,5.5 0 0 0 1147,338.5 L1147,306.5 Z" fill="url(#pTan)"/>
<ellipse cx="1116" cy="306.5" rx="31" ry="5" fill="#6f694d" stroke="#111" stroke-width=".8"/>
<ellipse cx="1116" cy="306.5" rx="31" ry="5" fill="url(#pTan)"/>
<polygon points="1085.0,310.5 1106.0,312.5 1098.0,315.5 1085.0,317.0" fill="#0b0b08" stroke="none" stroke-width="0" stroke-linejoin="round"/>
<path d="M1096,285.5 L1096,305 A20.8,4 0 0 0 1137.6,305 L1137.6,285.5 Z" fill="#4b6fa5" stroke="#0a0f18" stroke-width="0.8" stroke-linejoin="round"/>
<path d="M1096,285.5 L1096,305 A20.8,4 0 0 0 1137.6,305 L1137.6,285.5 Z" fill="url(#pHub)"/>
<ellipse cx="1116.8" cy="285.5" rx="20.8" ry="4" fill="#17243a" stroke="#000" stroke-width=".8"/>
<path d="M1194.2,500 L1194.2,540 A14,3.5 0 0 0 1222.2,540 L1222.2,512 Z" fill="#a3bbe0" stroke="#0a0f18" stroke-width="0.8" stroke-linejoin="round"/>
<path d="M1194.2,500 L1194.2,540 A14,3.5 0 0 0 1222.2,540 L1222.2,512 Z" fill="url(#pLight2)"/>
<polygon points="1162.5,442.3 1220.0,463.7 1355.4,514.5 1372.3,523.0 1379.0,534.8 1381.0,560.0 1376.0,590.0 1369.7,600.0 1363.8,580.4 1348.6,570.3 1223.4,519.5 1194.2,506.1 1161.2,492.2" fill="#7d92b9" stroke="#0a0f18" stroke-width="0.8" stroke-linejoin="round"/>
<polygon points="1162.5,442.3 1220.0,463.7 1355.4,514.5 1372.3,523.0 1379.0,534.8 1381.0,560.0 1376.0,590.0 1369.7,600.0 1363.8,580.4 1348.6,570.3 1223.4,519.5 1194.2,506.1 1161.2,492.2" fill="url(#pArmSide)"/>
<polygon points="1162.5,442.3 1204.4,435.7 1381.6,500.0 1379.0,534.8 1372.3,523.0 1355.4,514.5 1220.0,463.7" fill="#586a88" stroke="#0a0f18" stroke-width="0.8" stroke-linejoin="round"/>
<polygon points="1162.5,442.3 1204.4,435.7 1381.6,500.0 1379.0,534.8 1372.3,523.0 1355.4,514.5 1220.0,463.7" fill="url(#pArmTop)"/>
<polygon points="1164.3,461.5 1151.6,476.7 1177.0,485.6" fill="#46546c" stroke="#0a0f18" stroke-width="0.7" stroke-linejoin="round"/>
<polygon points="1164.3,461.5 1151.6,476.7 1177.0,485.6" fill="url(#pScrew)"/>
<polygon points="1217.6,481.8 1205.0,497.0 1230.3,508.4" fill="#46546c" stroke="#0a0f18" stroke-width="0.7" stroke-linejoin="round"/>
<polygon points="1217.6,481.8 1205.0,497.0 1230.3,508.4" fill="url(#pScrew)"/>
<polygon points="1276.0,504.6 1262.0,521.1 1290.0,532.5" fill="#46546c" stroke="#0a0f18" stroke-width="0.7" stroke-linejoin="round"/>
<polygon points="1276.0,504.6 1262.0,521.1 1290.0,532.5" fill="url(#pScrew)"/>
<polygon points="1339.4,530.0 1321.6,546.5 1352.0,556.6" fill="#46546c" stroke="#0a0f18" stroke-width="0.7" stroke-linejoin="round"/>
<polygon points="1339.4,530.0 1321.6,546.5 1352.0,556.6" fill="url(#pScrew)"/>
<polygon points="1180.8,460.2 1205.0,469.1 1193.5,484.3" fill="#a9bfe0" stroke="#0a0f18" stroke-width="0.7" stroke-linejoin="round"/>
<polygon points="1180.8,460.2 1205.0,469.1 1193.5,484.3" fill="url(#pScrew)"/>
<polygon points="1234.0,483.0 1258.2,493.2 1246.8,507.1" fill="#a9bfe0" stroke="#0a0f18" stroke-width="0.7" stroke-linejoin="round"/>
<polygon points="1234.0,483.0 1258.2,493.2 1246.8,507.1" fill="url(#pScrew)"/>
<polygon points="1292.4,504.6 1321.6,516.0 1306.4,532.5" fill="#a9bfe0" stroke="#0a0f18" stroke-width="0.7" stroke-linejoin="round"/>
<polygon points="1292.4,504.6 1321.6,516.0 1306.4,532.5" fill="url(#pScrew)"/>
<polygon points="1354.6,519.0 1374.0,535.0 1371.0,560.4" fill="#a9bfe0" stroke="#0a0f18" stroke-width="0.7" stroke-linejoin="round"/>
<polygon points="1354.6,519.0 1374.0,535.0 1371.0,560.4" fill="url(#pScrew)"/>
<polygon points="1404.0,536.0 1476.0,532.0 1478.0,572.0 1440.0,590.0 1404.0,592.0" fill="#6f86ad" stroke="#0a0f18" stroke-width="0.8" stroke-linejoin="round"/>
<polygon points="1404.0,536.0 1476.0,532.0 1478.0,572.0 1440.0,590.0 1404.0,592.0" fill="url(#pLight)"/>
<path d="M1405.5,541 L1405.5,587 A8.8,3 0 0 0 1423,587 L1423,541 Z" fill="#a3b2aa" stroke="#1a2220" stroke-width="0.8" stroke-linejoin="round"/>
<path d="M1405.5,541 L1405.5,587 A8.8,3 0 0 0 1423,587 L1423,541 Z" fill="url(#pScrew)"/>
<path d="M1456,529 L1456,569.5 A8,2.6 0 0 0 1472,569.5 L1472,529 Z" fill="#506d3c" stroke="#10180c" stroke-width="0.8" stroke-linejoin="round"/>
<path d="M1456,529 L1456,569.5 A8,2.6 0 0 0 1472,569.5 L1472,529 Z" fill="url(#pScrew)"/>
<polygon points="1372.4,600.0 1489.5,590.0 1509.0,590.0 1508.0,600.0 1503.0,642.3 1518.0,688.0 1537.0,701.0 1538.0,711.3 1536.5,720.0 1432.6,713.7 1432.6,690.0 1386.7,687.5 1385.9,678.8 1372.4,617.0" fill="#435470" stroke="#0a0f18" stroke-width="0.8" stroke-linejoin="round"/>
<polygon points="1372.4,600.0 1489.5,590.0 1509.0,590.0 1508.0,600.0 1503.0,642.3 1518.0,688.0 1537.0,701.0 1538.0,711.3 1536.5,720.0 1432.6,713.7 1432.6,690.0 1386.7,687.5 1385.9,678.8 1372.4,617.0" fill="url(#pBase)"/>
<polygon points="1425.5,639.2 1506.4,605.9 1501.6,623.3 1433.4,648.7" fill="#7a8eb0" stroke="#0a0f18" stroke-width="0.6" stroke-linejoin="round"/>
<polygon points="1425.5,639.2 1506.4,605.9 1501.6,623.3 1433.4,648.7" fill="url(#pLight2)"/>
<polygon points="1429.5,664.5 1446.0,662.0 1465.0,669.3 1512.7,688.3 1535.0,704.2 1536.5,719.5 1432.6,713.7 1433.4,690.0" fill="#8496b4" stroke="#0a0f18" stroke-width="0.7" stroke-linejoin="round"/>
<polygon points="1429.5,664.5 1446.0,662.0 1465.0,669.3 1512.7,688.3 1535.0,704.2 1536.5,719.5 1432.6,713.7 1433.4,690.0" fill="url(#pLight)"/>
<polygon points="1429.5,664.5 1446.0,662.0 1465.0,669.3 1512.7,688.3 1535.0,704.2 1500.0,693.0 1466.0,679.0 1436.0,675.0" fill="#b3c7e8" stroke="#0a0f18" stroke-width="0.5" stroke-linejoin="round"/>
<polygon points="1429.5,664.5 1446.0,662.0 1465.0,669.3 1512.7,688.3 1535.0,704.2 1500.0,693.0 1466.0,679.0 1436.0,675.0" fill="url(#pLight2)"/>
<polygon points="1476.0,653.0 1497.0,640.0 1503.0,655.0 1508.0,671.0 1492.0,668.0" fill="#8fa3c4" stroke="none" stroke-width="0" stroke-linejoin="round"/>
<polygon points="1476.0,653.0 1497.0,640.0 1503.0,655.0 1508.0,671.0 1492.0,668.0" fill="url(#pScrew)"/>
<polygon points="1504.8,606.0 1509.5,598.0 1526.0,632.8 1526.0,645.5 1503.2,642.3" fill="#a9c1e6" stroke="#0a0f18" stroke-width="0.6" stroke-linejoin="round"/>
<polygon points="1504.8,606.0 1509.5,598.0 1526.0,632.8 1526.0,645.5 1503.2,642.3" fill="url(#pLight2)"/>
<polygon points="1503.2,642.3 1512.0,645.0 1519.0,668.0 1517.8,688.0 1508.0,664.0" fill="#a9c1e6" stroke="#0a0f18" stroke-width="0.6" stroke-linejoin="round"/>
<polygon points="1503.2,642.3 1512.0,645.0 1519.0,668.0 1517.8,688.0 1508.0,664.0" fill="url(#pLight2)"/>
<path d="M1385,490 L1399,525 L1404,540 L1404,578 Q1406,592 1420,590 L1440,586 L1473.6,568.4 L1489.5,573.1 L1489.5,595.3 L1425.5,624.1 Q1410,629 1396,624 L1372.4,617 L1370.6,576.3 L1377,541 L1381.7,503.4 Z" fill="#a6bddb" stroke="#0a0f18" stroke-width="0.8" stroke-linejoin="round"/>
<path d="M1385,490 L1399,525 L1404,540 L1404,578 Q1406,592 1420,590 L1440,586 L1473.6,568.4 L1489.5,573.1 L1489.5,595.3 L1425.5,624.1 Q1410,629 1396,624 L1372.4,617 L1370.6,576.3 L1377,541 L1381.7,503.4 Z" fill="url(#pLight2)"/>
<polygon points="1420.0,590.0 1440.0,586.0 1473.6,568.4 1489.5,573.1 1430.0,598.0 1410.0,600.0" fill="#b4c9ea" stroke="#0a0f18" stroke-width="0.5" stroke-linejoin="round"/>
<polygon points="1420.0,590.0 1440.0,586.0 1473.6,568.4 1489.5,573.1 1430.0,598.0 1410.0,600.0" fill="url(#pLight)"/>
<polygon points="1386.5,455.9 1413.4,454.3 1418.2,506.6 1407.0,511.3 1404.0,536.0 1399.0,525.6 1385.0,490.7" fill="#3b485e" stroke="#0a0f18" stroke-width="0.8" stroke-linejoin="round"/>
<polygon points="1386.5,455.9 1413.4,454.3 1418.2,506.6 1407.0,511.3 1404.0,536.0 1399.0,525.6 1385.0,490.7" fill="url(#pBoxTop)"/>
<polygon points="1405.5,511.3 1416.6,508.2 1548.0,520.8 1546.5,535.0 1445.0,528.8 1445.0,543.0 1404.0,539.9" fill="#f00" stroke="#200" stroke-width="0.8" stroke-linejoin="round"/>
<polygon points="1405.5,511.3 1416.6,508.2 1548.0,520.8 1546.5,535.0 1445.0,528.8 1445.0,543.0 1404.0,539.9" fill="url(#pRed)"/>
<polygon points="1437.2,345.6 1672.0,361.9 1716.3,389.8 1453.5,372.0" fill="#3e4c62" stroke="#0a0f18" stroke-width="0.8" stroke-linejoin="round"/>
<polygon points="1437.2,345.6 1672.0,361.9 1716.3,389.8 1453.5,372.0" fill="url(#pBoxTop)"/>
<path d="M1437.2,345.6 Q1412,352 1409.3,380.5 L1404.7,455 L1414.5,471 L1416.3,468.8 L1422.5,400 Q1425,374 1453.5,372 Z" fill="#2d394c" stroke="#0a0f18" stroke-width="0.8" stroke-linejoin="round"/>
<path d="M1437.2,345.6 Q1412,352 1409.3,380.5 L1404.7,455 L1414.5,471 L1416.3,468.8 L1422.5,400 Q1425,374 1453.5,372 Z" fill="url(#pBoxTop)"/>
<polygon points="1412.0,454.0 1422.0,470.0 1414.0,486.0 1418.0,500.0 1442.0,511.0 1416.6,509.0 1405.5,511.3" fill="#2d394c" stroke="none" stroke-width="0" stroke-linejoin="round"/>
<polygon points="1412.0,454.0 1422.0,470.0 1414.0,486.0 1418.0,500.0 1442.0,511.0 1416.6,509.0 1405.5,511.3" fill="url(#pBoxTop)"/>
<path d="M1453.5,372 L1716.3,389.8 L1689.4,530.7 L1546.5,520 L1439.5,508.4 Q1416,505 1415.5,485 L1422.5,400 Q1425,374 1453.5,372 Z" fill="#a8bedc" stroke="#0a0f18" stroke-width="0.8" stroke-linejoin="round"/>
<path d="M1453.5,372 L1716.3,389.8 L1689.4,530.7 L1546.5,520 L1439.5,508.4 Q1416,505 1415.5,485 L1422.5,400 Q1425,374 1453.5,372 Z" fill="url(#pBox)"/>
<polygon points="1535.0,700.5 1654.4,708.0 1651.6,717.2 1538.0,711.3" fill="#465874" stroke="#0a0f18" stroke-width="0.8" stroke-linejoin="round"/>
<polygon points="1535.0,700.5 1654.4,708.0 1651.6,717.2 1538.0,711.3" fill="url(#pPlate)"/>
<polygon points="1538.0,711.3 1651.6,717.2 1649.8,731.9 1536.5,726.0" fill="#f00" stroke="#200" stroke-width="0.8" stroke-linejoin="round"/>
<polygon points="1538.0,711.3 1651.6,717.2 1649.8,731.9 1536.5,726.0" fill="url(#pRed)"/>
<polygon points="1386.7,687.5 1433.4,689.9 1432.6,713.7 1536.5,720.0 1536.5,726.0 1384.3,715.3" fill="#f00" stroke="#200" stroke-width="0.8" stroke-linejoin="round"/>
<polygon points="1386.7,687.5 1433.4,689.9 1432.6,713.7 1536.5,720.0 1536.5,726.0 1384.3,715.3" fill="url(#pRed)"/>
<polygon points="1503.2,642.3 1526.5,645.8 1640.5,654.0 1655.6,696.3 1518.4,687.7" fill="#465874" stroke="#0a0f18" stroke-width="0.8" stroke-linejoin="round"/>
<polygon points="1503.2,642.3 1526.5,645.8 1640.5,654.0 1655.6,696.3 1518.4,687.7" fill="url(#pPlate)"/>
<polygon points="1518.4,687.7 1655.6,696.3 1654.4,708.0 1518.4,699.3" fill="#f00" stroke="#200" stroke-width="0.8" stroke-linejoin="round"/>
<polygon points="1518.4,687.7 1655.6,696.3 1654.4,708.0 1518.4,699.3" fill="url(#pRed)"/>
<polygon points="1509.0,590.0 1547.4,581.9 1628.8,587.7 1666.0,641.2 1526.5,633.0" fill="#465874" stroke="#0a0f18" stroke-width="0.8" stroke-linejoin="round"/>
<polygon points="1509.0,590.0 1547.4,581.9 1628.8,587.7 1666.0,641.2 1526.5,633.0" fill="url(#pPlate)"/>
<polygon points="1509.0,589.5 1526.5,633.0 1526.5,644.7 1507.5,606.0" fill="#222c3c" stroke="#05080e" stroke-width="0.6" stroke-linejoin="round"/>
<polygon points="1526.5,633.0 1666.0,641.6 1665.0,654.0 1526.5,644.7" fill="#f00" stroke="#200" stroke-width="0.8" stroke-linejoin="round"/>
<polygon points="1526.5,633.0 1666.0,641.6 1665.0,654.0 1526.5,644.7" fill="url(#pRed)"/>
<path d="M1508,578 L1508,590 A20.3,7 0 0 0 1548.6,590 L1548.6,578 Z" fill="#a9c1e6" stroke="#0a0f18" stroke-width="0.8" stroke-linejoin="round"/>
<path d="M1508,578 L1508,590 A20.3,7 0 0 0 1548.6,590 L1548.6,578 Z" fill="url(#pLight2)"/>
<ellipse cx="1528.3" cy="578" rx="20.3" ry="8.2" fill="#a9c1e6" stroke="#0a0f18" stroke-width=".8"/>
<ellipse cx="1528.3" cy="578" rx="20.3" ry="8.2" fill="url(#pLight2)"/>
<g id="axes">
<path d="M894,900 L857,897.5" stroke="#d02020" stroke-width="1.4"/><path d="M856,897.3 L860.5,894.3 L860.3,900.7 Z" fill="#c01818"/>
<path d="M893.5,900 L897.5,866" stroke="#3aa53a" stroke-width="1.4"/><path d="M897.6,861.5 L893.8,866.5 L901,866.8 Z" fill="#3aa53a"/>
<path d="M890.2,887 L894.6,887 L893.8,894.5 Z" fill="#6b6bf0"/>
<text x="838.5" y="897.2" font-family="Liberation Sans" font-style="italic" font-weight="700" font-size="24" fill="#e01010">X</text>
<text x="890.5" y="851.8" font-family="Liberation Sans" font-style="italic" font-weight="700" font-size="25" fill="#3ab53a">Y</text>
<text x="886" y="887.4" font-family="Liberation Sans" font-style="italic" font-weight="700" font-size="19" fill="#6b6bf0">Z</text>
</g>
</svg>
<!--MODEL-END-->

<!-- ============ SCENE PANEL ============ -->
<div class="a" id="scene" style="left:1637px;top:114px;width:240px;height:275px;border:1px solid #a9d4e4;border-radius:3px;background:rgba(244,244,244,.8)"></div>
<svg class="a" style="left:1649.5px;top:129.5px;opacity:.8" width="9" height="9"><use href="#tgm"/></svg>
<div class="st" style="left:1662px;top:126px;">Scene</div>
<svg class="a" style="left:1665.5px;top:149.5px;opacity:.8" width="9" height="9"><use href="#tgm"/></svg>
<div class="st" style="left:1678px;top:145px;">QuarterModel_separatedScr…</div>
<svg class="a" style="left:1681.5px;top:169.5px;opacity:.8" width="9" height="9"><use href="#tgp"/></svg>
<svg class="a" style="left:1695px;top:168px" width="13" height="8.4"><use href="#eye"/></svg>
<div class="st" style="left:1712px;top:165px;">volumeOnGeoVolumes_2</div>
<svg class="a" style="left:1681.5px;top:189.5px;opacity:.8" width="9" height="9"><use href="#tgp"/></svg>
<svg class="a" style="left:1695px;top:188px" width="13" height="8.4"><use href="#eye"/></svg>
<div class="st" style="left:1712px;top:185px;">volumeOnGeoVolumes_3</div>
<svg class="a" style="left:1681.5px;top:209.5px;opacity:.8" width="9" height="9"><use href="#tgp"/></svg>
<svg class="a" style="left:1695px;top:208px" width="13" height="8.4"><use href="#eye"/></svg>
<div class="st" style="left:1712px;top:205px;font-weight:700;color:#2f86b8;letter-spacing:.12px">volumeOnGeoVolumes_4</div>
<svg class="a" style="left:1681.5px;top:229.5px;opacity:.8" width="9" height="9"><use href="#tgp"/></svg>
<svg class="a" style="left:1695px;top:228px" width="13" height="8.4"><use href="#eye"/></svg>
<div class="st" style="left:1712px;top:225px;">volumeOnGeoVolumes_1</div>
<svg class="a" style="left:1681.5px;top:249.5px;opacity:.8" width="9" height="9"><use href="#tgp"/></svg>
<svg class="a" style="left:1695px;top:248px" width="13" height="8.4"><use href="#eye"/></svg>
<div class="st" style="left:1712px;top:245px;">volumeOnGeoVolumes_0</div>
<svg class="a" style="left:1681.5px;top:269.5px;opacity:.8" width="9" height="9"><use href="#tgp"/></svg>
<svg class="a" style="left:1695px;top:268px" width="13" height="8.4"><use href="#eye"/></svg>
<div class="st" style="left:1712px;top:265px;font-weight:700;color:#2f86b8;letter-spacing:.12px">volumeOnGeoVolumes_5</div>
<svg class="a" style="left:1665.5px;top:289.5px;opacity:.8" width="9" height="9"><use href="#tgm"/></svg>
<div class="st" style="left:1678px;top:285px;">Topological Entity Sets</div>
<div class="st" style="left:1701px;top:308px;">Contact_Zone_1</div>
<div class="st" style="left:1701px;top:334px;">Contact_Zone_2</div>
<div class="st" style="left:1701px;top:360px;">YZ_Symmetry_Plane</div>
<svg class="a" style="left:1864px;top:376px" width="8" height="8" viewBox="0 0 8 8"><path d="M7,1 V7 H1 Z" fill="#ccc" stroke="#888" stroke-width=".8"/></svg>
</body>
</html>
